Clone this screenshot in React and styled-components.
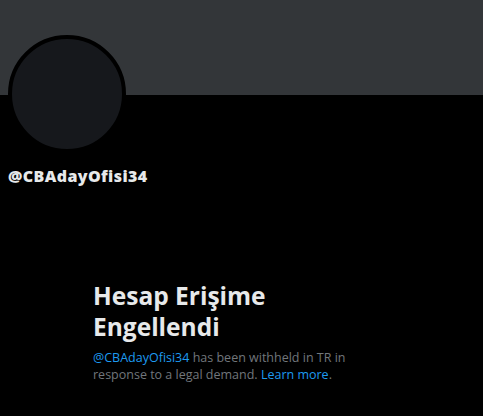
import React from "react";
import styled, { createGlobalStyle } from "styled-components";

const GlobalStyle = createGlobalStyle`
  html, body {
    margin: 0;
    padding: 0;
    background: #000000;
  }
  body {
    font-family: "Open Sans", "Noto Sans", "Liberation Sans", sans-serif;
    color: #e7e9ea;
  }
`;

const Page = styled.div`
  width: 483px;
  height: 416px;
  overflow: hidden;
  background: #000000;
  display: flex;
  flex-direction: column;
`;

const Banner = styled.div`
  height: 95px;
  background: #333639;
  flex-shrink: 0;
`;

const ProfileHeader = styled.div`
  padding: 0 8px;
  display: flex;
  flex-direction: column;
  align-items: flex-start;
`;

const Avatar = styled.div`
  width: 110px;
  height: 110px;
  margin-top: -60px;
  border: 4px solid #000000;
  border-radius: 50%;
  background: #16181c;
`;

const Handle = styled.div`
  margin-top: 13px;
  font-size: 16px;
  font-weight: 800;
  line-height: 20px;
  letter-spacing: 0.4px;
`;

const Notice = styled.div`
  width: 297px;
  margin: 94px auto 0;
  display: flex;
  flex-direction: column;
  gap: 7px;
`;

const Title = styled.h1`
  margin: 0;
  font-size: 24.5px;
  font-weight: 700;
  line-height: 31px;
  color: #e7e9ea;
`;

const Body = styled.p`
  margin: 0;
  font-size: 12.5px;
  line-height: 17px;
  color: #71767b;
`;

const Link = styled.a`
  color: #1d9bf0;
  text-decoration: none;
`;

export default function App() {
  return (
    <>
      <GlobalStyle />
      <Page>
        <Banner />
        <ProfileHeader>
          <Avatar />
          <Handle>@CBAdayOfisi34</Handle>
        </ProfileHeader>
        <Notice>
          <Title>Hesap Erişime Engellendi</Title>
          <Body>
            <Link>@CBAdayOfisi34</Link> has been withheld in TR in response to
            a legal demand. <Link>Learn more</Link>.
          </Body>
        </Notice>
      </Page>
    </>
  );
}
